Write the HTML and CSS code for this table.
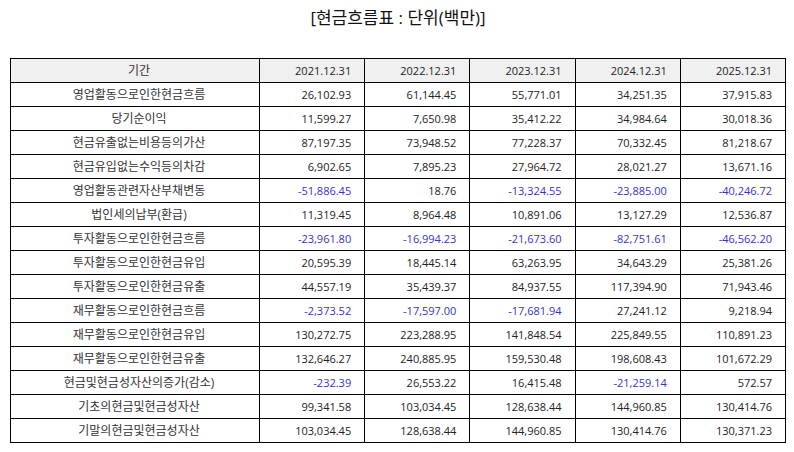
FILE: index.html
```html
<!DOCTYPE html>
<html lang="ko">
<head>
<meta charset="utf-8">
<title>현금흐름표</title>
<link rel="stylesheet" href="styles.css">
</head>
<body>
<div class="page">
  <h1 class="title">[현금흐름표 : 단위(백만)]</h1>
  <table class="cf">
    <colgroup>
      <col class="c-label"><col><col><col><col><col>
    </colgroup>
    <thead>
      <tr><th class="lbl">기간</th><th>2021.12.31</th><th>2022.12.31</th><th>2023.12.31</th><th>2024.12.31</th><th>2025.12.31</th></tr>
    </thead>
    <tbody>
      <tr><td class="lbl">영업활동으로인한현금흐름</td><td>26,102.93</td><td>61,144.45</td><td>55,771.01</td><td>34,251.35</td><td>37,915.83</td></tr>
      <tr><td class="lbl">당기순이익</td><td>11,599.27</td><td>7,650.98</td><td>35,412.22</td><td>34,984.64</td><td>30,018.36</td></tr>
      <tr><td class="lbl">현금유출없는비용등의가산</td><td>87,197.35</td><td>73,948.52</td><td>77,228.37</td><td>70,332.45</td><td>81,218.67</td></tr>
      <tr><td class="lbl">현금유입없는수익등의차감</td><td>6,902.65</td><td>7,895.23</td><td>27,964.72</td><td>28,021.27</td><td>13,671.16</td></tr>
      <tr><td class="lbl">영업활동관련자산부채변동</td><td class="neg">-51,886.45</td><td>18.76</td><td class="neg">-13,324.55</td><td class="neg">-23,885.00</td><td class="neg">-40,246.72</td></tr>
      <tr><td class="lbl">법인세의납부(환급)</td><td>11,319.45</td><td>8,964.48</td><td>10,891.06</td><td>13,127.29</td><td>12,536.87</td></tr>
      <tr><td class="lbl">투자활동으로인한현금흐름</td><td class="neg">-23,961.80</td><td class="neg">-16,994.23</td><td class="neg">-21,673.60</td><td class="neg">-82,751.61</td><td class="neg">-46,562.20</td></tr>
      <tr><td class="lbl">투자활동으로인한현금유입</td><td>20,595.39</td><td>18,445.14</td><td>63,263.95</td><td>34,643.29</td><td>25,381.26</td></tr>
      <tr><td class="lbl">투자활동으로인한현금유출</td><td>44,557.19</td><td>35,439.37</td><td>84,937.55</td><td>117,394.90</td><td>71,943.46</td></tr>
      <tr><td class="lbl">재무활동으로인한현금흐름</td><td class="neg">-2,373.52</td><td class="neg">-17,597.00</td><td class="neg">-17,681.94</td><td>27,241.12</td><td>9,218.94</td></tr>
      <tr><td class="lbl">재무활동으로인한현금유입</td><td>130,272.75</td><td>223,288.95</td><td>141,848.54</td><td>225,849.55</td><td>110,891.23</td></tr>
      <tr><td class="lbl">재무활동으로인한현금유출</td><td>132,646.27</td><td>240,885.95</td><td>159,530.48</td><td>198,608.43</td><td>101,672.29</td></tr>
      <tr><td class="lbl">현금및현금성자산의증가(감소)</td><td class="neg">-232.39</td><td>26,553.22</td><td>16,415.48</td><td class="neg">-21,259.14</td><td>572.57</td></tr>
      <tr><td class="lbl">기초의현금및현금성자산</td><td>99,341.58</td><td>103,034.45</td><td>128,638.44</td><td>144,960.85</td><td>130,414.76</td></tr>
      <tr><td class="lbl">기말의현금및현금성자산</td><td>103,034.45</td><td>128,638.44</td><td>144,960.85</td><td>130,414.76</td><td>130,371.23</td></tr>
    </tbody>
  </table>
</div>
</body>
</html>
```

FILE: styles.css
```css
html, body {
  margin: 0;
  padding: 0;
  background: #ffffff;
}

.page {
  padding: 8px 0 0 10px;
  font-family: "Open Sans", "Noto Sans CJK KR", sans-serif;
  color: #222222;
}

.title {
  margin: 0 0 30px 0;
  width: 776px;
  text-align: center;
  font-size: 17px;
  font-weight: normal;
  line-height: 20px;
  color: #111111;
}

.cf {
  width: 776px;
  border-collapse: collapse;
  table-layout: fixed;
  font-size: 11px;
}

.c-label {
  width: 249px;
}

.cf th,
.cf td {
  border: 1px solid #000000;
  height: 23px;
  padding: 0 13px 0 4px;
  text-align: right;
  font-weight: normal;
  line-height: 14px;
  white-space: nowrap;
}

.cf thead th {
  background: #f0f0f0;
}

.cf .lbl {
  text-align: center;
  padding: 0 0 0 8px;
  font-size: 12px;
  color: #333333;
}

.cf .neg {
  color: #3232d2;
}
```
